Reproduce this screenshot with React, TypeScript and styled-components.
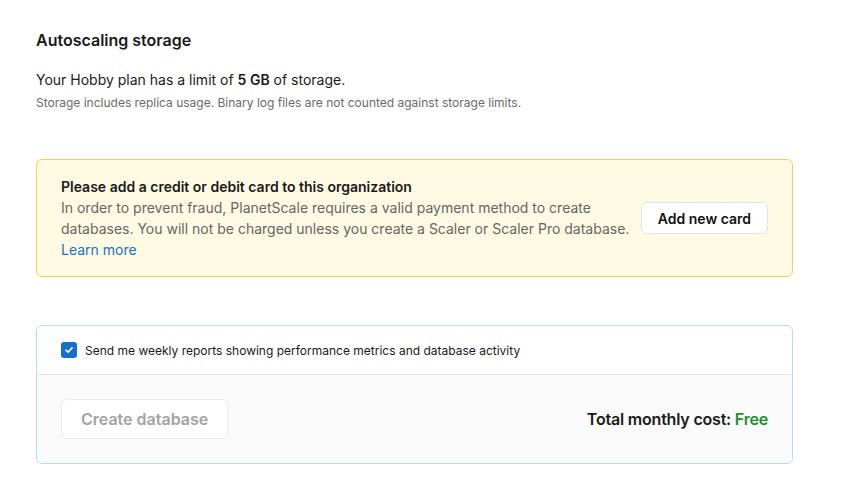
import React from "react";
import styled, { createGlobalStyle } from "styled-components";

const Global = createGlobalStyle`
  html, body { margin: 0; padding: 0; background: #ffffff; }
  body { font-family: Inter, "Noto Sans", sans-serif; color: #1a1a1a; -webkit-font-smoothing: antialiased; }
  * { box-sizing: border-box; }
`;

const Page = styled.div`
  width: 857px;
  padding: 28px 64px 0 36px;
  display: flex;
  flex-direction: column;
`;

const Heading = styled.h2`
  margin: 0;
  font-size: 16px;
  line-height: 24px;
  font-weight: 600;
  color: #1a1a1a;
`;

const Lead = styled.p`
  margin: 18px 0 0;
  font-size: 14px;
  line-height: 20px;
  color: #1a1a1a;
  strong { font-weight: 600; }
`;

const Note = styled.p`
  margin: 4px 0 0;
  font-size: 12px;
  line-height: 18px;
  color: #6b6b6b;
`;

const Alert = styled.div`
  margin-top: 47px;
  border: 1px solid #f5cf4f;
  background: #fffae3;
  border-radius: 6px;
  padding: 16px 24px 16px;
  display: flex;
  align-items: center;
  justify-content: space-between;
  gap: 6px;
`;

const AlertBody = styled.div`
  display: flex;
  flex-direction: column;
  font-size: 14px;
  line-height: 21px;
`;

const AlertTitle = styled.div`
  font-weight: 600;
  color: #1a1a1a;
`;

const AlertText = styled.div`
  color: #666666;
`;

const Link = styled.a`
  color: #1a73c9;
  text-decoration: none;
`;

const Button = styled.button<{ $disabled?: boolean; $h: number }>`
  font-family: inherit;
  font-size: ${(p) => (p.$disabled ? "16px" : "14px")};
  font-weight: 600;
  height: ${(p) => p.$h}px;
  padding: 0 ${(p) => (p.$disabled ? 19 : 16)}px;
  border-radius: 6px;
  border: 1px solid ${(p) => (p.$disabled ? "#ececec" : "#e3e3e3")};
  background: #ffffff;
  color: ${(p) => (p.$disabled ? "#a3a3a3" : "#111111")};
  white-space: nowrap;
  flex-shrink: 0;
  cursor: ${(p) => (p.$disabled ? "default" : "pointer")};
`;

const Card = styled.div`
  margin-top: 48px;
  border: 1px solid #b5dcf4;
  border-radius: 6px;
  overflow: hidden;
`;

const CheckRow = styled.label`
  display: flex;
  align-items: center;
  gap: 8px;
  height: 49px;
  padding: 0 24px;
  font-size: 12px;
  color: #1a1a1a;
  border-bottom: 1px solid #e6e6e6;
`;

const Box = styled.span`
  width: 16px;
  height: 16px;
  border-radius: 3px;
  background: #1570cc;
  display: inline-flex;
  align-items: center;
  justify-content: center;
`;

const Footer = styled.div`
  background: #fafafa;
  height: 88px;
  padding: 0 24px;
  display: flex;
  align-items: center;
  justify-content: space-between;
`;

const Total = styled.div`
  font-size: 16px;
  font-weight: 600;
  letter-spacing: -0.2px;
  color: #1a1a1a;
`;

const Free = styled.span`
  color: #1f8f2f;
`;

export default function App() {
  return (
    <>
      <Global />
      <Page>
        <Heading>Autoscaling storage</Heading>
        <Lead>
          Your Hobby plan has a limit of <strong>5 GB</strong> of storage.
        </Lead>
        <Note>Storage includes replica usage. Binary log files are not counted against storage limits.</Note>
        <Alert>
          <AlertBody>
            <AlertTitle>Please add a credit or debit card to this organization</AlertTitle>
            <AlertText>
              In order to prevent fraud, PlanetScale requires a valid payment method to create databases. You will
              not be charged unless you create a Scaler or Scaler Pro database.
            </AlertText>
            <Link href="#">Learn more</Link>
          </AlertBody>
          <Button $h={32}>Add new card</Button>
        </Alert>
        <Card>
          <CheckRow>
            <Box>
              <svg width="10" height="10" viewBox="0 0 10 10" fill="none">
                <path d="M2 5.2 L4.1 7.2 L8 2.9" stroke="#fff" strokeWidth="1.6" strokeLinecap="round" strokeLinejoin="round" />
              </svg>
            </Box>
            Send me weekly reports showing performance metrics and database activity
          </CheckRow>
          <Footer>
            <Button $disabled $h={40}>Create database</Button>
            <Total>
              Total monthly cost: <Free>Free</Free>
            </Total>
          </Footer>
        </Card>
      </Page>
    </>
  );
}
